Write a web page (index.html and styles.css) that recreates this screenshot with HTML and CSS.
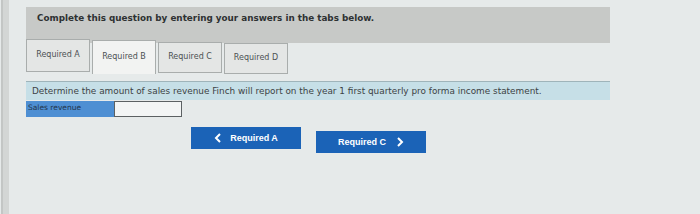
FILE: index.html
```html
<!DOCTYPE html>
<html lang="en">
<head>
    <meta charset="UTF-8">
    <title>Required B</title>
    <link rel="stylesheet" href="styles.css">
</head>
<body>
    <div class="edge"></div>
    <div class="page">
        <div class="banner">Complete this question by entering your answers in the tabs below.</div>

        <div class="tabs">
            <span class="tab">Required A</span>
            <span class="tab active">Required B</span>
            <span class="tab">Required C</span>
            <span class="tab">Required D</span>
        </div>

        <div class="question">Determine the amount of sales revenue Finch will report on the year 1 first quarterly pro forma income statement.</div>

        <div class="answer-row">
            <div class="answer-label">Sales revenue</div>
            <div class="answer-input"></div>
        </div>

        <div class="nav">
            <button class="nav-btn">
                <svg width="8" height="10" viewBox="0 0 8 10"><path d="M6 1 L2 5 L6 9" fill="none" stroke="#fff" stroke-width="2"/></svg>
                Required A
            </button>
            <button class="nav-btn next">
                Required C
                <svg width="8" height="10" viewBox="0 0 8 10"><path d="M2 1 L6 5 L2 9" fill="none" stroke="#fff" stroke-width="2"/></svg>
            </button>
        </div>
    </div>
</body>
</html>
```

FILE: styles.css
```css
* {
    margin: 0;
    padding: 0;
    box-sizing: border-box;
}

body {
    font-family: Verdana, "DejaVu Sans", sans-serif;
    background: #e6eaea;
    width: 700px;
    height: 214px;
    overflow: hidden;
    display: flex;
}

.edge {
    width: 8px;
    background: #d3d6d5;
    border-left: 2px solid #c3c6c5;
    margin-left: 1px;
}

.page {
    padding: 7px 0 0 17px;
    width: 601px;
}

.banner {
    background: #c7c9c7;
    height: 36px;
    padding: 6px 0 0 11px;
    font-size: 8.8px;
    font-weight: bold;
    color: #2e3132;
}

.tabs {
    display: flex;
    gap: 2px;
    margin-top: -4px;
}

.tab {
    width: 64px;
    height: 33px;
    border: 1px solid #a9adac;
    background: #e4e6e5;
    font-size: 8px;
    color: #4c5153;
    display: flex;
    align-items: center;
    justify-content: center;
    padding-bottom: 2px;
}

.tab.active {
    background: #f2f3f2;
    border-bottom: none;
    margin-top: 1px;
    height: 34px;
}

.tabs .tab:nth-child(3) {
    margin-top: 3px;
    height: 31px;
}

.tabs .tab:nth-child(4) {
    margin-top: 4px;
    height: 31px;
}

.question {
    margin-top: 7px;
    background: #c6dfe7;
    border-top: 1px solid #9fb4ba;
    height: 19px;
    padding: 4px 0 0 6px;
    font-size: 8.9px;
    color: #3c4244;
    white-space: nowrap;
}

.answer-row {
    display: flex;
    margin-top: 1px;
}

.answer-label {
    width: 88px;
    height: 16px;
    background: #4e8fd3;
    font-size: 7.5px;
    color: #23344a;
    padding: 2px 0 0 2px;
}

.answer-input {
    width: 68px;
    height: 16px;
    background: #f3f5f5;
    border: 1px solid #5c6163;
}

.nav {
    display: flex;
    gap: 15px;
    margin: 10px 0 0 165px;
}

.nav-btn {
    width: 110px;
    height: 22px;
    background: #1b63b7;
    color: #fff;
    border: none;
    font-family: "Liberation Sans", Arial, sans-serif;
    font-size: 9px;
    font-weight: bold;
    display: flex;
    align-items: center;
    justify-content: center;
    gap: 8px;
}

.nav-btn.next {
    margin-top: 4px;
    gap: 10px;
}
```
